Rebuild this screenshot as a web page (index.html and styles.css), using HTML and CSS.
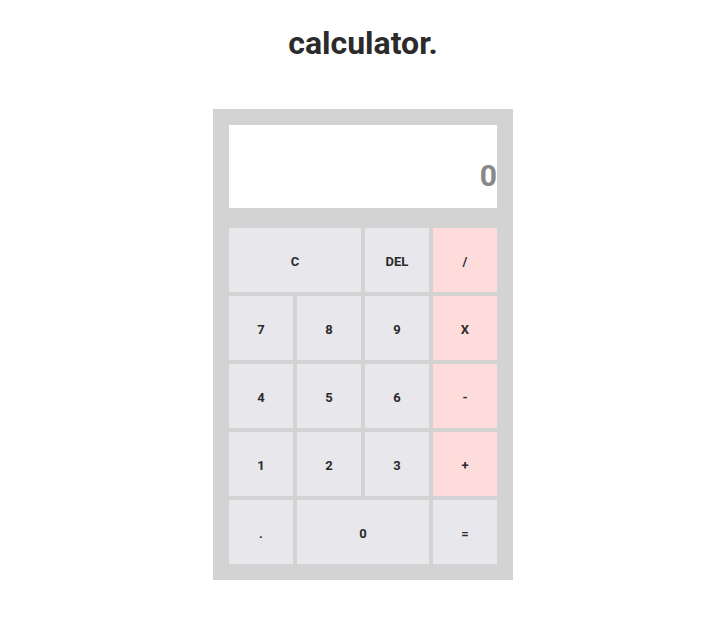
FILE: index.html
```html
<!DOCTYPE html>
<html>
<head>
<meta charset="utf-8">
<link rel="stylesheet" href="styles.css">
</head>
<body>
<h1 class="title">calculator.</h1>
<div class="calc">
  <div class="display"><span class="value">0</span></div>
  <div class="keys">
    <button class="key span2">C</button>
    <button class="key">DEL</button>
    <button class="key op">/</button>
    <button class="key">7</button>
    <button class="key">8</button>
    <button class="key">9</button>
    <button class="key op">X</button>
    <button class="key">4</button>
    <button class="key">5</button>
    <button class="key">6</button>
    <button class="key op">-</button>
    <button class="key">1</button>
    <button class="key">2</button>
    <button class="key">3</button>
    <button class="key op">+</button>
    <button class="key">.</button>
    <button class="key span2">0</button>
    <button class="key">=</button>
  </div>
</div>
</body>
</html>
```
FILE: styles.css
```css
html, body {
  margin: 0;
  padding: 0;
  background: #ffffff;
}
body {
  font-family: Roboto, "Liberation Sans", sans-serif;
  display: flex;
  flex-direction: column;
  align-items: center;
  padding-right: 2px;
}
.title {
  margin: 23px 0 0 0;
  font-size: 32px;
  font-weight: 700;
  color: #2b2b2b;
  line-height: 40px;
  height: 40px;
}
.calc {
  margin-top: 46px;
  width: 268px;
  padding: 16px;
  background: #d3d3d3;
  display: flex;
  flex-direction: column;
  gap: 20px;
}
.display {
  height: 83px;
  background: #ffffff;
  display: flex;
  align-items: flex-end;
  justify-content: flex-end;
  box-sizing: border-box;
  padding-bottom: 15px;
}
.value {
  font-size: 30px;
  font-weight: 700;
  color: #888888;
  line-height: normal;
}
.keys {
  display: grid;
  grid-template-columns: repeat(4, 64px);
  grid-auto-rows: 64px;
  gap: 4px;
}
.key {
  border: none;
  margin: 0;
  padding: 2px 0 0 0;
  background: #e8e8ec;
  font-family: Roboto, "Liberation Sans", sans-serif;
  font-size: 13px;
  font-weight: 700;
  color: #2b2b2b;
}
.key.op {
  background: #ffdcdc;
}
.span2 {
  grid-column: span 2;
}
```
